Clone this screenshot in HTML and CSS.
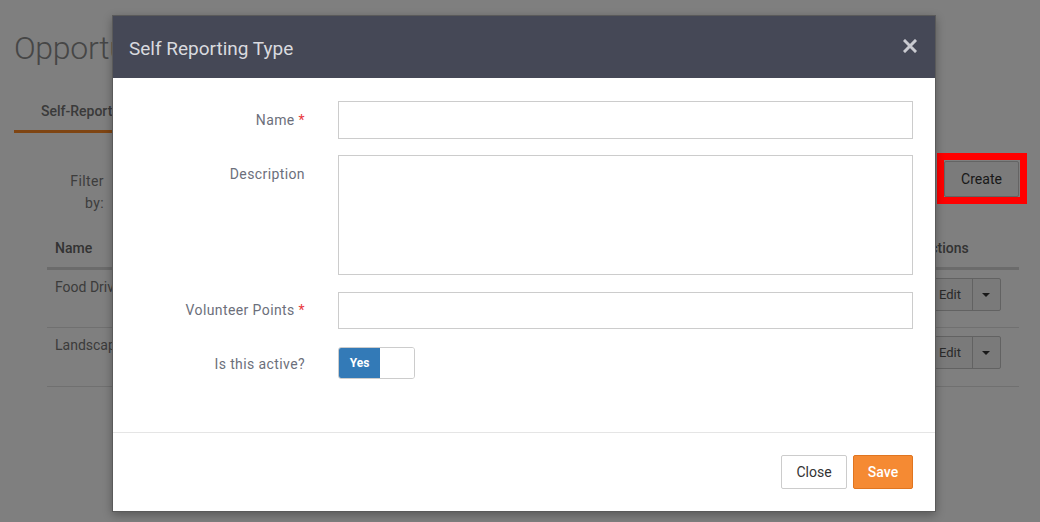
FILE: index.html
```html
<!DOCTYPE html>
<html lang="en">
<head>
<meta charset="utf-8">
<title>Self Reporting Type</title>
<link rel="stylesheet" href="styles.css">
</head>
<body>
<div class="page">
  <h1 class="page-title">Opportunities</h1>
  <div class="tabs">
    <div class="tab active">Self-Reported Types</div>
  </div>
  <div class="toolbar">
    <div class="filter-label">Filter<br>by:</div>
    <div class="toolbar-spacer"></div>
    <button class="btn btn-create" type="button">Create</button>
  </div>
  <table class="grid">
    <thead>
      <tr><th class="col-name">Name</th><th>Description</th><th class="col-actions">Actions</th></tr>
    </thead>
    <tbody>
      <tr>
        <td class="col-name">Food Drive</td><td></td>
        <td class="col-actions"><div class="split"><span class="split-main">Edit</span><span class="split-caret"></span></div></td>
      </tr>
      <tr>
        <td class="col-name">Landscaping</td><td></td>
        <td class="col-actions"><div class="split"><span class="split-main">Edit</span><span class="split-caret"></span></div></td>
      </tr>
    </tbody>
  </table>
</div>

<div class="backdrop"></div>
<div class="highlight"></div>

<div class="modal">
  <div class="modal-header">
    <h2 class="modal-title">Self Reporting Type</h2>
    <svg class="modal-close" width="14" height="14" viewBox="0 0 14 14" aria-label="Close">
      <path d="M2 2 L12 12 M12 2 L2 12" stroke="#c9cad0" stroke-width="3" stroke-linecap="square"/>
    </svg>
  </div>
  <div class="modal-body">
    <div class="form-row">
      <label class="form-label">Name <span class="req">*</span></label>
      <input class="form-input" type="text">
    </div>
    <div class="form-row">
      <label class="form-label">Description</label>
      <textarea class="form-input form-textarea"></textarea>
    </div>
    <div class="form-row">
      <label class="form-label">Volunteer Points <span class="req">*</span></label>
      <input class="form-input form-input-short" type="text">
    </div>
    <div class="form-row form-row-toggle">
      <label class="form-label">Is this active?</label>
      <div class="toggle"><span class="toggle-on">Yes</span><span class="toggle-off"></span></div>
    </div>
  </div>
  <div class="modal-footer">
    <button class="btn btn-default" type="button">Close</button>
    <button class="btn btn-primary" type="button">Save</button>
  </div>
</div>
</body>
</html>
```

FILE: styles.css
```css
* { box-sizing: border-box; }

html, body {
  margin: 0;
  padding: 0;
  width: 1040px;
  height: 522px;
  overflow: hidden;
}

body {
  background: #ffffff;
  font-family: Roboto, "Liberation Sans", Arial, sans-serif;
  font-size: 14px;
  color: #707070;
  position: relative;
}

/* ---------- background page ---------- */
.page {
  padding: 28px 21px 0 14px;
}

.page-title {
  margin: 0;
  font-weight: 300;
  font-size: 32px;
  line-height: 40px;
  color: #8c8c8c;
  letter-spacing: -0.3px;
}

.tabs {
  display: flex;
  margin-top: 34px;
  padding-left: 0;
}

.tab {
  padding: 0 27px 10px 27px;
  font-size: 14px;
  line-height: 18px;
  color: #747474;
  font-weight: 500;
  border-bottom: 3px solid #ff8a26;
}

.toolbar {
  display: flex;
  align-items: flex-start;
  margin-top: 28px;
  padding-left: 28px;
}

.filter-label {
  width: 62px;
  text-align: right;
  line-height: 22px;
  font-size: 14px;
  letter-spacing: 0.4px;
  color: #7a7a7a;
  margin-top: 9px;
}

.toolbar-spacer { flex: 1; }

.btn {
  font-family: Roboto, "Liberation Sans", Arial, sans-serif;
  font-size: 14px;
  border-radius: 2px;
  cursor: pointer;
}

.btn-create {
  width: 75px;
  height: 36px;
  background: #f6f6f6;
  border: 1px solid #c8c8c8;
  color: #333;
}

.grid {
  margin: 20px 0 0 33px;
  width: 972px;
  border-collapse: collapse;
  font-size: 14px;
}

.grid th {
  text-align: left;
  font-weight: 500;
  color: #666;
  padding: 0 8px 11px 8px;
  border-bottom: 3px solid #d6d6d6;
  height: 34px;
  vertical-align: bottom;
}

.grid td {
  padding: 9px 8px;
  height: 59px;
  vertical-align: top;
  color: #777;
  border-bottom: 1px solid #e0e0e0;
}

.grid .col-actions { width: 103px; padding-left: 0; padding-right: 18px; }
.grid td.col-actions { padding-top: 8px; }
.grid th.col-actions { padding-left: 5px; }

.split {
  display: inline-flex;
  height: 33px;
  border: 1px solid #c4c4c4;
  border-radius: 2px;
  background: #f4f4f4;
}

.split-main {
  width: 56px;
  display: flex;
  align-items: center;
  justify-content: flex-end;
  padding-right: 11px;
  color: #555;
  font-size: 13px;
  border-right: 1px solid #c4c4c4;
}

.split-caret {
  width: 27px;
  position: relative;
}

.split-caret::after {
  content: "";
  position: absolute;
  left: 9px;
  top: 14px;
  border-left: 4px solid transparent;
  border-right: 4px solid transparent;
  border-top: 4px solid #333;
}

/* ---------- overlay ---------- */
.backdrop {
  position: absolute;
  inset: 0;
  background: rgba(0, 0, 0, 0.5);
}

.highlight {
  position: absolute;
  left: 937px;
  top: 153px;
  width: 90px;
  height: 51px;
  border: 7px solid #ff0000;
}

/* ---------- modal ---------- */
.modal {
  position: absolute;
  left: 112px;
  top: 15px;
  width: 824px;
  height: 497px;
  background: #ffffff;
  border: 1px solid #5a5a5a;
  display: flex;
  flex-direction: column;
  box-shadow: 0 3px 9px rgba(0, 0, 0, 0.3);
}

.modal-header {
  height: 62px;
  flex: none;
  background: #454856;
  display: flex;
  align-items: center;
  padding: 0 16px 0 16px;
}

.modal-title {
  margin: 0;
  flex: 1;
  font-weight: 400;
  font-size: 19px;
  line-height: 24px;
  color: #d9dadf;
  padding-top: 3px;
}

.modal-close {
  display: block;
  margin-top: -3px;
  margin-right: 2px;
}

.modal-body {
  height: 355px;
  flex: none;
  padding: 23px 22px 0 0;
  border-bottom: 1px solid #e5e5e5;
  display: flex;
  flex-direction: column;
  gap: 16px;
}

.form-row {
  display: grid;
  grid-template-columns: 192px 1fr;
  column-gap: 33px;
  align-items: start;
}

.form-label {
  text-align: right;
  font-size: 14px;
  line-height: 20px;
  letter-spacing: 0.4px;
  color: #6c6f7b;
  padding-top: 9px;
}

.req { color: #e8383d; }

.form-input {
  display: block;
  width: 100%;
  height: 38px;
  border: 1px solid #cccccc;
  border-radius: 0;
  background: #fff;
  font-family: inherit;
  font-size: 14px;
  margin: 0;
}

.form-input-short { height: 37px; margin-top: 1px; }

.form-textarea {
  height: 120px;
  resize: none;
}

.form-row-toggle { margin-top: 2px; }
.form-row-toggle .form-label { padding-top: 7px; }

.toggle {
  display: flex;
  width: 77px;
  height: 32px;
  border: 1px solid #cccccc;
  border-radius: 3px;
  overflow: hidden;
}

.toggle-on {
  width: 41px;
  background: #337ab7;
  color: #fff;
  font-weight: 700;
  font-size: 12px;
  display: flex;
  align-items: center;
  justify-content: center;
  padding-bottom: 1px;
}

.toggle-off { flex: 1; background: #fff; }

.modal-footer {
  flex: 1;
  display: flex;
  justify-content: flex-end;
  align-items: flex-start;
  gap: 6px;
  padding: 22px 22px 0 0;
}

.btn-default {
  width: 66px;
  height: 34px;
  background: #fff;
  border: 1px solid #cccccc;
  color: #333;
}

.btn-primary {
  width: 60px;
  height: 34px;
  background: #f58a33;
  border: 1px solid #e07520;
  color: #fff;
  font-weight: 500;
}
```
